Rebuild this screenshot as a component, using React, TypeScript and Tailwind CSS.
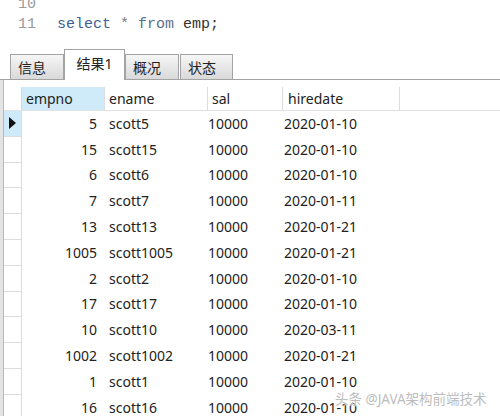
const rows: [number, string, string, string][] = [
  [5, 'scott5', '10000', '2020-01-10'],
  [15, 'scott15', '10000', '2020-01-10'],
  [6, 'scott6', '10000', '2020-01-10'],
  [7, 'scott7', '10000', '2020-01-11'],
  [13, 'scott13', '10000', '2020-01-21'],
  [1005, 'scott1005', '10000', '2020-01-21'],
  [2, 'scott2', '10000', '2020-01-10'],
  [17, 'scott17', '10000', '2020-01-10'],
  [10, 'scott10', '10000', '2020-03-11'],
  [1002, 'scott1002', '10000', '2020-01-21'],
  [1, 'scott1', '10000', '2020-01-10'],
  [16, 'scott16', '10000', '2020-01-10'],
];

const tabs = ['信息', '结果1', '概况', '状态'];

function App() {
  return (
    <div
      className="relative w-[500px] h-[416px] overflow-hidden bg-white text-[#222]"
      style={{ fontFamily: '"Noto Sans", "Noto Sans CJK SC", sans-serif' }}
    >
      {/* editor */}
      <div className="flex h-[50px] flex-col font-['Liberation_Mono',monospace] text-[15px] leading-[20px]">
        <div className="-mt-[5px] flex">
          <span className="w-[57px] pl-[18px] text-[#9a9a9a]">10</span>
        </div>
        <div className="flex">
          <span className="w-[57px] pl-[18px] text-[#9a9a9a]">11</span>
          <span className="text-[#3e5f96]">select</span>
          <span className="text-[#777]">&nbsp;*&nbsp;</span>
          <span className="text-[#5a6f8e]">from</span>
          <span className="text-[#333]">&nbsp;emp;</span>
        </div>
      </div>

      {/* tabs */}
      <div className="flex h-[30px] items-end border-b border-[#a3a3a3] pl-[10px] text-[14px] leading-none">
        {tabs.map((t, i) =>
          i === 1 ? (
            <div
              key={t}
              className="relative -mb-px flex h-[31px] w-[61px] justify-center border border-b-0 border-[#a3a3a3] bg-white pt-[7px]"
            >
              {t}
            </div>
          ) : (
            <div
              key={t}
              className={`flex h-[25px] border border-b-0 border-[#a3a3a3] bg-gradient-to-b from-[#f6f6f6] to-[#d9d9d9] pl-[7px] pt-[6px] ${
                i === 0 ? 'w-[54px]' : i === 2 ? 'w-[54px]' : 'ml-[1px] w-[53px]'
              }`}
            >
              {t}
            </div>
          )
        )}
      </div>

      {/* grid */}
      <div className="flex">
        <div className="w-[4px] shrink-0 bg-[#e4e4e4] border-r border-[#b8b8b8]" />
        <div className="flex-1">
          <div className="h-[7px]" />
          <div className="flex h-[24px] items-center border-b border-[#e2e2e2] text-[14px] leading-none">
            <div className="h-full w-[18px] shrink-0 border-r border-[#d8d8d8]" />
            <div className="flex h-full w-[83px] items-center bg-[#cfeaf8] pl-[4px] border-r border-[#dcdcdc]">empno</div>
            <div className="flex h-full w-[103px] items-center pl-[4px] border-r border-[#dcdcdc]">ename</div>
            <div className="flex h-full w-[75px] items-center pl-[4px] border-r border-[#dcdcdc]">sal</div>
            <div className="flex h-full w-[117px] items-center pl-[5px] border-r border-[#dcdcdc]">hiredate</div>
          </div>
          {rows.map((r, i) => (
            <div key={i} className="flex h-[25.8px] items-center text-[14px] leading-none">
              <div
                className={`flex h-full w-[18px] shrink-0 items-center justify-center border-r border-b border-[#dcdcdc] ${
                  i === 0 ? 'bg-[#cfeaf8]' : ''
                }`}
              >
                {i === 0 && (
                  <svg width="7" height="12" viewBox="0 0 7 12">
                    <path d="M0 0 L7 6 L0 12 Z" fill="#111" />
                  </svg>
                )}
              </div>
              <div className="w-[79px] pr-[4px] text-right">{r[0]}</div>
              <div className="w-[103px] pl-[8px]">{r[1]}</div>
              <div className="w-[75px] pl-[4px]">{r[2]}</div>
              <div className="w-[117px] pl-[5px]">{r[3]}</div>
            </div>
          ))}
        </div>
      </div>

      {/* watermark */}
      <div
        className="absolute left-[335px] top-[393px] whitespace-nowrap text-[13.5px] leading-none text-[#bdbdbd]"
        style={{ textShadow: '0 0 2px #fff, 0 0 1px #fff' }}
      >
        头条 @JAVA架构前端技术
      </div>
    </div>
  );
}

export default App;
